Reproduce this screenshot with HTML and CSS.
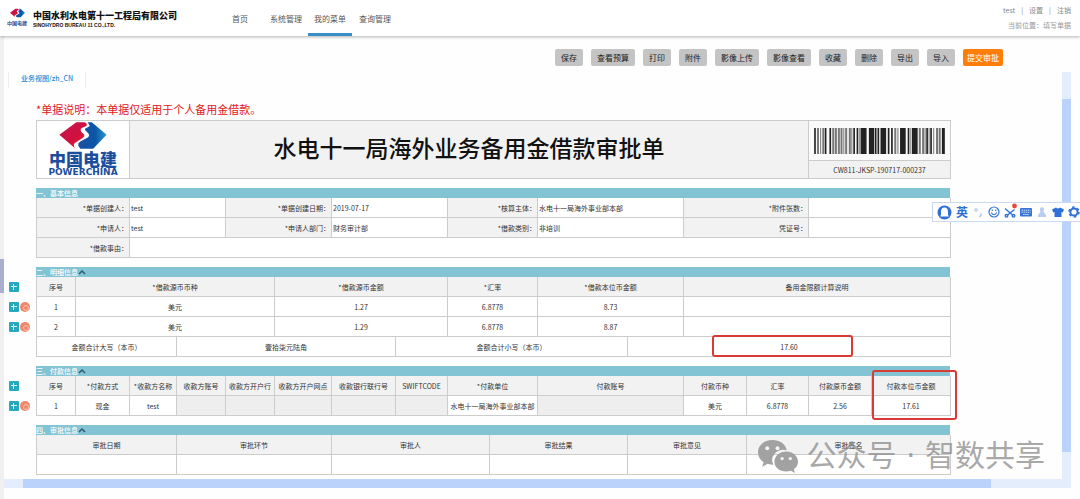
FILE: index.html
```html
<!DOCTYPE html>
<html lang="zh-CN">
<head>
<meta charset="utf-8">
<title>水电十一局海外业务备用金借款审批单</title>
<link rel="stylesheet" href="styles.css">
</head>
<body>
<svg class="defs" width="0" height="0" aria-hidden="true">
  <defs>
    <linearGradient id="red" x1="0" y1="0" x2="1" y2="1"><stop offset="0" stop-color="#c8174f"/><stop offset=".6" stop-color="#d0103f"/><stop offset="1" stop-color="#f03c28"/></linearGradient>
    <linearGradient id="blue" x1="0" y1="0" x2="1" y2="0"><stop offset="0" stop-color="#1c4fa2"/><stop offset=".6" stop-color="#0a56a6"/><stop offset="1" stop-color="#2f9ad0"/></linearGradient>
    <symbol id="mark" viewBox="0 0 140 80">
      <path fill="url(#red)" d="M50 1H74Q84 4 80 12L66 18Q60 24 66 30L74 38Q76 44 68 48L46 62Q40 68 46 78L0 38Z"/>
      <path fill="url(#blue)" d="M84 1H96L140 38 100 79H62L56 70Q54 63 62 58L84 46Q92 40 84 32L76 24Q74 20 80 18L90 12Z"/>
    </symbol>
    <symbol id="chevron" viewBox="0 0 8 6"><path d="M1 5 4 2 7 5" fill="none" stroke="#2c5a78" stroke-width="1.5"/></symbol>
  </defs>
</svg>

<header class="top">
  <a class="brand" href="#">
    <span class="brand-logo"><svg class="brand-mark"><use href="#mark"/></svg><b>中国电建</b></span>
    <span class="brand-name"><strong>中国水利水电第十一工程局有限公司</strong><small>SINOHYDRO BUREAU 11 CO.,LTD.</small></span>
  </a>
  <nav class="nav">
    <a href="#">首页</a><a href="#">系统管理</a><a class="active" href="#">我的菜单</a><a href="#">查询管理</a>
  </nav>
  <div class="user">
    <div class="user-links"><a href="#">test</a><span>|</span><a href="#">设置</a><span>|</span><a href="#">注销</a></div>
    <div class="crumb">当前位置：填写单据</div>
  </div>
</header>

<main class="page">
  <div class="side"><button class="handle" aria-label="展开"></button></div>
  <div class="work">
    <div class="toolbar">
      <button>保存</button><button>查看预算</button><button>打印</button><button>附件</button><button>影像上传</button><button>影像查看</button><button>收藏</button><button>删除</button><button>导出</button><button>导入</button><button class="submit">提交审批</button>
    </div>
    <div class="pane">
      <div class="content">
        <div class="tabs"><a href="#">业务视图/zh_CN</a></div>
        <p class="note">*单据说明：本单据仅适用于个人备用金借款。</p>

        <table class="grid title-grid">
          <colgroup><col class="w93"><col class="w679"><col class="w142"></colgroup>
          <tr>
            <td class="logo-cell" rowspan="2"><div class="logo"><svg class="logo-mark"><use href="#mark"/></svg><b>中国电建</b><span>POWERCHINA</span></div></td>
            <td class="title-cell" rowspan="2"><h1>水电十一局海外业务备用金借款审批单</h1></td>
            <td class="code-cell">
              <svg class="barcode" viewBox="0 0 395 80" preserveAspectRatio="none" aria-label="条形码">
                <g stroke="#222" fill="none">
                  <path stroke-width="5" d="M3 0V80M35 0V80M49 0V80M121 0V80M131 0V80M186 0V80M194 0V80M225 0V80M235 0V80M285 0V80M341 0V80M353 0V80"/>
                  <path stroke-width="9" d="M145 0V80M154 0V80M170 0V80M177 0V80M205 0V80M213 0V80M264 0V80M272 0V80M300 0V80M308 0V80M390 0V80"/>
                </g>
                <g stroke="#777" fill="none">
                  <path stroke-width="6" d="M12 0V80M28 0V80M58 0V80M66 0V80M75 0V80M83 0V80M97 0V80M108 0V80M245 0V80M319 0V80M329 0V80M371 0V80M379 0V80"/>
                  <path stroke-width="3" d="M20 0V80M90 0V80M114 0V80M138 0V80M253 0V80M292 0V80M335 0V80M347 0V80M361 0V80"/>
                </g>
              </svg>
            </td>
          </tr>
          <tr><td class="number-cell">CW811-JKSP-190717-000237</td></tr>
        </table>

        <section class="block">
          <div class="gutter"></div>
          <div class="body">
            <h2>一、基本信息</h2>
            <table class="grid info">
              <colgroup><col class="w93"><col class="w96"><col class="w106"><col class="w116"><col class="w90"><col class="w146"><col class="w125"><col class="w142"></colgroup>
              <tr><th><label for="f1">*单据创建人：</label></th><td><input id="f1" value="test"></td><th><label for="f2">*单据创建日期：</label></th><td><input id="f2" value="2019-07-17"></td><th><label for="f3">*核算主体：</label></th><td><input id="f3" value="水电十一局海外事业部本部"></td><th><label for="f4">*附件张数：</label></th><td><input id="f4"></td></tr>
              <tr><th><label for="f5">*申请人：</label></th><td><input id="f5" value="test"></td><th><label for="f6">*申请人部门：</label></th><td><input id="f6" value="财务审计部"></td><th><label for="f7">*借款类别：</label></th><td><input id="f7" value="非培训"></td><th><label for="f8">凭证号：</label></th><td><input id="f8"></td></tr>
              <tr><th><label for="f9">*借款事由：</label></th><td colspan="7"><input id="f9"></td></tr>
            </table>
          </div>
        </section>

        <section class="block">
          <div class="gutter">
            <div><button class="add" aria-label="添加"></button></div>
            <div><button class="add" aria-label="添加"></button><button class="del" aria-label="删除"></button></div>
            <div><button class="add" aria-label="添加"></button><button class="del" aria-label="删除"></button></div>
          </div>
          <div class="body">
            <h2>二、明细信息<svg class="chev"><use href="#chevron"/></svg></h2>
            <table class="grid">
              <colgroup><col class="w39"><col class="w101"><col class="w98"><col class="w121"><col class="w52"><col class="w90"><col class="w90"><col class="w56"><col class="w267"></colgroup>
              <tr><th>序号</th><th colspan="2">*借款源币币种</th><th colspan="2">*借款源币金额</th><th>*汇率</th><th colspan="2">*借款本位币金额</th><th>备用金限额计算说明</th></tr>
              <tr><td>1</td><td colspan="2">美元</td><td colspan="2">1.27</td><td>6.8778</td><td colspan="2">8.73</td><td></td></tr>
              <tr><td>2</td><td colspan="2">美元</td><td colspan="2">1.29</td><td>6.8778</td><td colspan="2">8.87</td><td></td></tr>
              <tr><td colspan="2">金额合计大写（本币）</td><td colspan="2">壹拾柒元陆角</td><td colspan="3">金额合计小写（本币）</td><td class="mark-cell" colspan="2">17.60<span class="ring ring-total"></span></td></tr>
            </table>
          </div>
        </section>

        <section class="block">
          <div class="gutter">
            <div><button class="add" aria-label="添加"></button></div>
            <div><button class="add" aria-label="添加"></button><button class="del" aria-label="删除"></button></div>
          </div>
          <div class="body">
            <h2>三、付款信息<svg class="chev"><use href="#chevron"/></svg></h2>
            <table class="grid">
              <colgroup><col class="w39"><col class="w54"><col class="w47"><col class="w49"><col class="w49"><col class="w57"><col class="w64"><col class="w52"><col class="w90"><col class="w146"><col class="w63"><col class="w62"><col class="w63"><col class="w79"></colgroup>
              <tr><th>序号</th><th>*付款方式</th><th>*收款方名称</th><th>收款方账号</th><th>收款方开户行</th><th>收款方开户网点</th><th>收款银行联行号</th><th>SWIFTCODE</th><th>*付款单位</th><th>付款账号</th><th>付款币种</th><th>汇率</th><th>付款原币金额</th><th class="mark-cell">付款本位币金额<span class="ring ring-pay"></span></th></tr>
              <tr><td>1</td><td>现金</td><td>test</td><td class="off"></td><td class="off"></td><td class="off"></td><td class="off"></td><td class="off"></td><td>水电十一局海外事业部本部</td><td class="off"></td><td>美元</td><td>6.8778</td><td>2.56</td><td>17.61</td></tr>
            </table>
          </div>
        </section>

        <section class="block">
          <div class="gutter"></div>
          <div class="body">
            <h2>四、审批信息<svg class="chev"><use href="#chevron"/></svg></h2>
            <table class="grid">
              <colgroup><col class="w140"><col class="w155"><col class="w158"><col class="w138"><col class="w119"><col class="w204"></colgroup>
              <tr><th>审批日期</th><th>审批环节</th><th>审批人</th><th>审批结果</th><th>审批意见</th><th>审批签名</th></tr>
              <tr><td></td><td></td><td></td><td></td><td></td><td></td></tr>
            </table>
          </div>
        </section>
      </div>
      <div class="vbar"><i></i></div>
    </div>
    <div class="hbar"><i></i></div>
  </div>
</main>

<div class="ime">
  <svg viewBox="0 0 15 15"><circle cx="7.500" cy="7.500" r="7" fill="#2f6fd8"/><path d="M7.500 2.500C4.800 2.500 4 4.500 4 7V10L3 11.500H12L11 10V7C11 4.500 10.200 2.500 7.500 2.500Z" fill="#fff"/></svg>
  <b>英</b>
  <svg viewBox="0 0 12 12"><circle cx="4" cy="4" r="1.300" fill="none" stroke="#a9bfe6"/><path d="M9 7.500Q9.500 9.500 7.500 11" fill="none" stroke="#a9bfe6" stroke-width="1.500"/></svg>
  <svg viewBox="0 0 12 12" fill="none" stroke="#3874d8" stroke-width="1.200"><circle cx="6" cy="6" r="5"/><path d="M3.300 6.500Q6 11 8.700 6.500"/><path d="M4.300 3.500V5M7.700 3.500V5"/></svg>
  <svg class="cut" viewBox="0 0 12 12" fill="none" stroke="#3874d8" stroke-width="1.500"><path d="M1 2.500 8.500 9M10.500 3.500 3.500 9"/><circle cx="2.500" cy="9.800" r="1.300"/><circle cx="9.500" cy="9.800" r="1.300"/><circle cx="10.500" cy="0" r="2.400" fill="#e8473c" stroke="none"/></svg>
  <svg viewBox="0 0 12 12"><rect x="0" y="2" width="12" height="8.500" rx="1" fill="#3874d8"/><path d="M1.500 4.200H10.500M1.500 6.200H10.500M3 8.500H9" stroke="#d4e2fa" stroke-dasharray="1.500 .6"/></svg>
  <svg viewBox="0 0 12 12" fill="#b9cdf0"><circle cx="6" cy="3.500" r="2.200"/><path d="M5 5H7L10 9V11H2V9Z"/></svg>
  <svg viewBox="0 0 12 12"><path d="M4 1.500Q6 3.500 8 1.500L12 3.500 10.800 6.500 9.500 6V11H2.500V6L1.200 6.500 0 3.500Z" fill="#2f6fd8"/></svg>
  <svg viewBox="0 0 12 12" fill="none" stroke="#2f6fd8"><circle cx="6" cy="6" r="3.600" stroke-width="2"/><circle cx="6" cy="6" r="5" stroke-width="1.500" stroke-dasharray="2.600 2.636"/></svg>
</div>

<div class="watermark">
  <svg viewBox="0 0 40 33"><path d="M15 1C7 1 1 6 1 13C1 17 3 20 6.500 22.500L5 27 10.500 24Q13 25 16 25A11 10 0 0 1 29 11C28 5 22 1 15 1Z"/><path d="M28.500 12C22 12 17 16.500 17 22C17 27.500 22 31.500 28.500 31.500Q31 31.500 33 30.800L37 33 36 29.300C38.500 27.500 40 25 40 22C40 16.500 35 12 28.500 12Z"/><g fill="#f4f4f4"><circle cx="10" cy="9" r="1.900"/><circle cx="20" cy="9" r="1.900"/><circle cx="24.500" cy="19" r="1.600"/><circle cx="32.500" cy="19" r="1.600"/></g></svg>
  <span>公众号 · 智数共享</span>
</div>
</body>
</html>
```
FILE: styles.css
```css
* { box-sizing: border-box; }
body {
  margin: 0;
  min-height: 100vh;
  display: flex;
  flex-direction: column;
  background: #fefefe;
  color: #333;
  font: 7px/10px "Noto Sans CJK SC", sans-serif;
  position: relative;
  overflow: hidden;
}
a { color: inherit; text-decoration: none; }
button, input { font: inherit; color: inherit; border: 0; padding: 0; margin: 0; background: none; }
.defs { position: absolute; }

/* Top bar */
.top {
  display: flex;
  height: 36px;
  padding: 0 9px 0 6px;
  background: #fff;
  box-shadow: 0 1px 3px rgba(0, 0, 0, .3);
  position: relative;
}
.brand { display: flex; gap: 5px; width: 216px; padding-top: 7px; }
.brand-logo { display: flex; flex-direction: column; align-items: center; width: 22px; color: #1b4f9e; font-size: 5px; line-height: 8px; }
.brand-mark { width: 15px; height: 12px; flex: none; }
.brand-name { display: flex; flex-direction: column; color: #111; white-space: nowrap; padding-top: 3px; }
.brand-name strong { font-size: 9px; line-height: 12px; font-weight: 900; }
.brand-name small { font: bold 5px/6px "Liberation Sans", sans-serif; }
.nav { display: flex; flex: 1; font-size: 8px; line-height: 38px; color: #555; }
.nav a { padding: 0 6px; height: 36px; }
.nav a:first-child { padding: 0 16px 0 10px; }
.nav .active { margin-right: 1px; border-bottom: 3px solid #3b8ec6; }
.user { color: #888; text-align: right; padding-top: 5px; }
.user-links { display: flex; gap: 6px; justify-content: flex-end; }
.crumb { padding-top: 5px; color: #999; }

/* Work area */
.page { display: flex; flex: 1; }
.side { width: 4px; background: #f0f0f1; padding-top: 223px; }
.handle { display: block; width: 4px; height: 34px; background: #a9afce; }
.work { flex: 1; min-width: 0; padding: 13px 9px 11px 0; }
.toolbar { display: flex; justify-content: flex-end; gap: 8px; padding-right: 68px; }
.toolbar button { height: 17px; padding: 0 6px; border-radius: 2px; background: #c4c4c4; color: #222; line-height: 17px; font-size: 8px; }
.toolbar .submit { padding: 0 4px; background: #ff7e0a; color: #fff; }
.pane { display: flex; padding-top: 6px; }
.content { flex: 1; min-width: 0; padding: 0 112px 4px 0; }
.vbar { width: 9px; background: #e4edfc; padding: 27px 0; display: flex; }
.vbar i { flex: 1; background: #bbd3fb; }
.hbar { height: 9px; background: #e4edfc; padding: 0 80px 0 19px; display: flex; }
.hbar i { flex: 1; background: #bbd3fb; }
.tabs { display: flex; padding-left: 4px; }
.tabs a { height: 16px; padding: 0 12px; border: solid #eee; border-width: 0 1px; color: #2a8ad4; line-height: 13px; font-weight: 500; }
.note { margin: 13px 0 3px 32px; color: #e02020; font-size: 11px; line-height: 16px; }

/* Tables */
.grid { width: 100%; table-layout: fixed; border-collapse: separate; border-spacing: 0; border-left: 1px solid #ccc; text-align: center; }
.grid th, .grid td { height: 20px; padding: 0; border: solid #ccc; border-width: 0 1px 1px 0; font-weight: 400; white-space: nowrap; background: #fff; }
.grid th { background: #f2f2f2; }
.grid .off { background: #eee; }
.title-grid { width: calc(100% - 32px); margin-left: 32px; border-top: 1px solid #ccc; }
.grid .title-cell, .grid .number-cell { background: #f2f2f2; }
.grid .title-cell { padding-bottom: 6px; }
.title-cell h1 { margin: 0; color: #111; font-size: 23px; line-height: 28px; font-weight: 500; }
.grid .code-cell { height: 40px; background: #fafafa; }
.grid .number-cell { height: 18px; }
.barcode { display: block; width: calc(100% - 10px); height: 26px; margin: 0 auto; }
.logo { display: flex; flex-direction: column; align-items: center; color: #1b4f9e; }
.logo-mark { width: 48px; height: 27px; }
.logo b { font-size: 17px; line-height: 19px; font-weight: 900; }
.logo span { font: bold 9px/9px "DejaVu Sans", sans-serif; }
.info th { text-align: right; padding-right: 1px; }
.info input { display: block; width: 100%; height: 19px; padding-left: 1px; }

.block { display: flex; padding-top: 9px; }
.gutter { width: 32px; padding: 10px 0 0 5px; }
.gutter div { display: flex; align-items: center; gap: 1px; height: 20px; }
.body { flex: 1; min-width: 0; }
.body h2 { display: flex; align-items: center; margin: 0; height: 10px; background: #82c3d4; color: #fff; font-size: 7px; line-height: 10px; font-weight: 500; }
.chev { width: 8px; height: 6px; }
.add, .del { flex: none; background: #27a9bd; width: 10px; height: 10px; border-radius: 1px; position: relative; }
.add::before, .add::after { content: ""; position: absolute; background: #d5f2f5; left: 2px; top: 4px; width: 6px; height: 1px; }
.add::after { left: 4px; top: 2px; width: 1px; height: 6px; }
.del { background: #f0866a; border-radius: 50%; }
.del::before { content: ""; position: absolute; left: 3px; top: 3px; width: 4px; height: 4px; border: 1px solid #f9c3b2; border-radius: 50%; }

.mark-cell { position: relative; }
.ring { position: absolute; border: 2px solid #d93a36; border-radius: 3px; }
.ring-total { left: 26%; right: 30%; top: -2px; height: 22px; }
.ring-pay { left: 0; right: -7px; top: -6px; height: 50px; z-index: 1; }

.w39 { width: 39px; } .w47 { width: 47px; } .w49 { width: 49px; } .w52 { width: 52px; }
.w54 { width: 54px; } .w56 { width: 56px; } .w57 { width: 57px; } .w62 { width: 62px; }
.w63 { width: 63px; } .w64 { width: 64px; } .w79 { width: 79px; } .w90 { width: 90px; }
.w93 { width: 93px; } .w96 { width: 96px; } .w98 { width: 98px; } .w101 { width: 101px; }
.w106 { width: 106px; } .w116 { width: 116px; } .w119 { width: 119px; } .w121 { width: 121px; }
.w125 { width: 125px; } .w138 { width: 138px; } .w140 { width: 140px; } .w142 { width: 142px; }
.w146 { width: 146px; } .w155 { width: 155px; } .w158 { width: 158px; } .w204 { width: 204px; }
.w267 { width: 267px; } .w679 { width: 679px; }

/* Floating input-method bar */
.ime {
  position: absolute;
  right: 0;
  top: 202px;
  display: flex;
  align-items: center;
  gap: 4px;
  height: 20px;
  padding-left: 4px;
  background: #fff;
  border: 1px solid #c8daf2;
  border-right: 0;
  color: #2f6fd8;
}
.ime svg { width: 12px; height: 12px; overflow: visible; }
.ime svg:first-child { width: 15px; height: 15px; }
.ime b { font-size: 12px; line-height: 16px; }

.watermark {
  position: absolute;
  right: 35px;
  top: 436px;
  display: flex;
  align-items: center;
  gap: 8px;
  color: rgba(140, 140, 140, .75);
  font: 30px/40px "DejaVu Sans", "Noto Sans CJK SC", sans-serif;
  white-space: nowrap;
}
.watermark svg { width: 41px; height: 34px; fill: #a2a2a2; }
```
